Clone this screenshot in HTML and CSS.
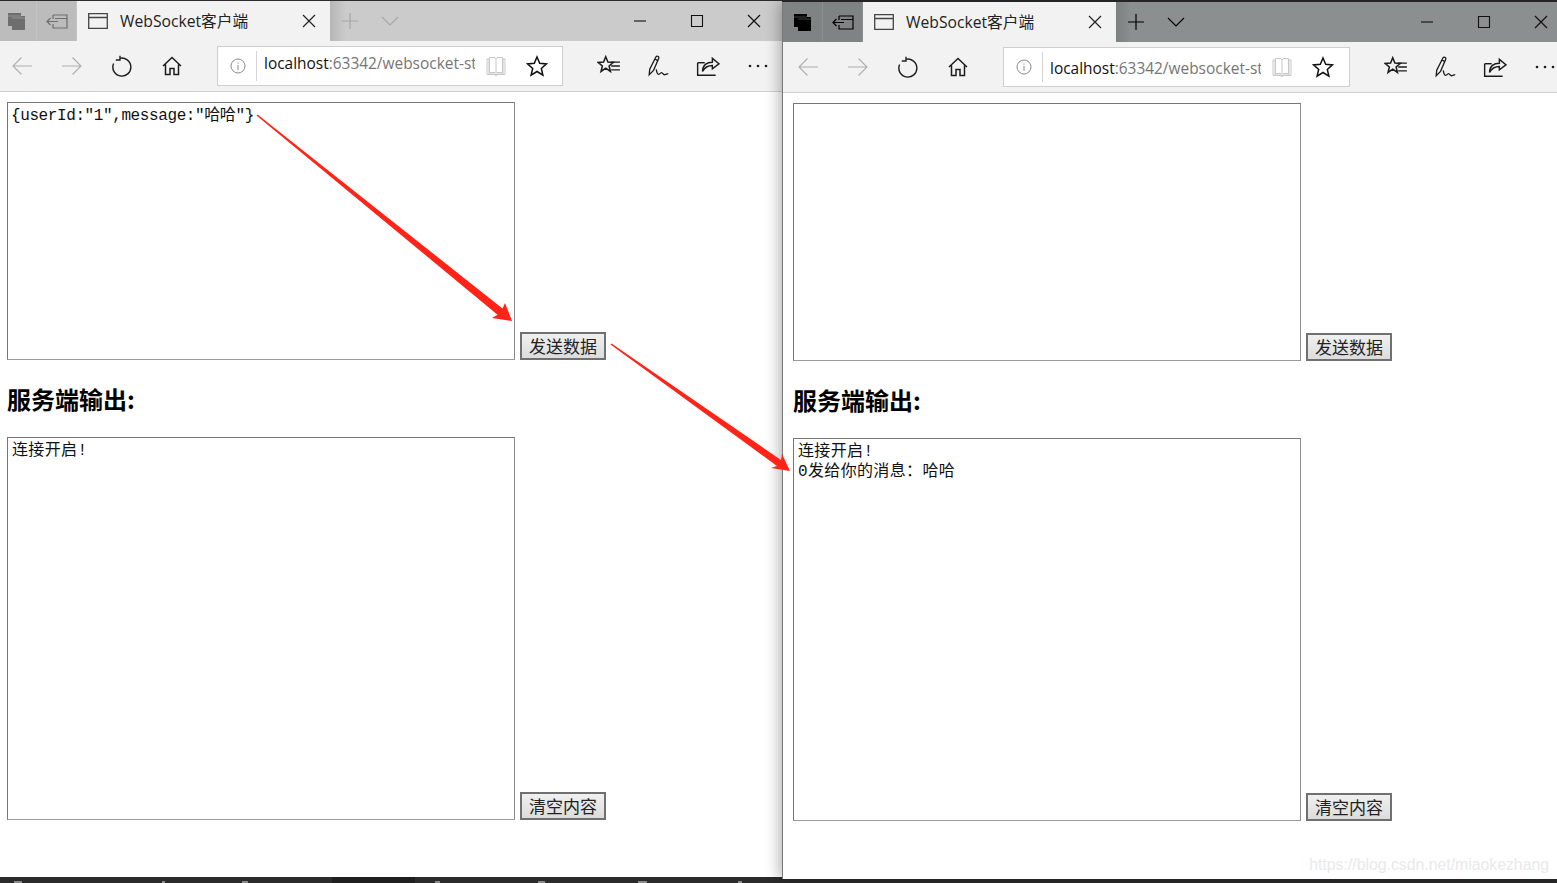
FILE: index.html
```html
<!DOCTYPE html>
<html lang="zh-CN">
<head>
<meta charset="utf-8">
<title>WebSocket客户端</title>
<link rel="stylesheet" href="styles.css">
</head>
<body>
<svg class="sprite" aria-hidden="true">
  <symbol id="i-tabs" viewBox="0 0 20 20"><path d="M1 2h13v3h4v14H5v-4H1z" fill="currentColor"/><path d="M5 7h13M1 5h13" stroke="#fff" stroke-opacity=".25" fill="none"/></symbol>
  <symbol id="i-aside" viewBox="0 0 22 20"><path d="M7 4h14v13H7v-4M7 8V4M9 7.500h12M1 10.500h11M4.500 7l-3.500 3.500 3.500 3.500" fill="none" stroke="currentColor" stroke-width="1.200"/></symbol>
  <symbol id="i-page" viewBox="0 0 20 16"><path d="M.7.700h18.600v14.600H.7zM.7 4.500h18.600" fill="none" stroke="currentColor" stroke-width="1.300"/></symbol>
  <symbol id="i-x" viewBox="0 0 14 14"><path d="M1 1l12 12M13 1L1 13" fill="none" stroke="currentColor" stroke-width="1.200"/></symbol>
  <symbol id="i-plus" viewBox="0 0 18 18"><path d="M9 1v16M1 9h16" fill="none" stroke="currentColor" stroke-width="1.200"/></symbol>
  <symbol id="i-chev" viewBox="0 0 18 10"><path d="M1 1l8 8 8-8" fill="none" stroke="currentColor" stroke-width="1.100"/></symbol>
  <symbol id="i-min" viewBox="0 0 14 14"><path d="M1 7h12" fill="none" stroke="currentColor" stroke-width="1.100"/></symbol>
  <symbol id="i-max" viewBox="0 0 14 14"><path d="M1.500 1.500h11v11h-11z" fill="none" stroke="currentColor" stroke-width="1.100"/></symbol>
  <symbol id="i-back" viewBox="0 0 22 20"><path d="M21 10H2M10.500 1.500L2 10l8.500 8.500" fill="none" stroke="currentColor" stroke-width="1.100"/></symbol>
  <symbol id="i-fwd" viewBox="0 0 22 20"><path d="M1 10h19M11.500 1.500L20 10l-8.500 8.500" fill="none" stroke="currentColor" stroke-width="1.100"/></symbol>
  <symbol id="i-reload" viewBox="0 0 22 22"><path d="M8.500 3.400A9 9 0 1 1 2.600 8.500M9 .8V5H4.800" fill="none" stroke="currentColor" stroke-width="1.400"/></symbol>
  <symbol id="i-home" viewBox="0 0 22 22"><path d="M2 11l9-8.500 9 8.500M4.500 9.500V19.500h4.500v-6h4v6h4.500V9.500" fill="none" stroke="currentColor" stroke-width="1.500"/></symbol>
  <symbol id="i-info" viewBox="0 0 16 16"><circle cx="8" cy="8" r="7" fill="none" stroke="currentColor"/><path d="M8 7v5M8 4.500v1.200" fill="none" stroke="currentColor"/></symbol>
  <symbol id="i-book" viewBox="0 0 20 20"><path d="M1 3h2v15h6l1 1 1-1h6V3h2v15.500h-7l-2 1-2-1H1zM3.500 1.500h5.500L10 3l1-1.500h5.500V16.500H11l-1 1-1-1H3.500zM10 3v14" fill="none" stroke="currentColor" stroke-width="1"/></symbol>
  <symbol id="i-star" viewBox="0 0 22 22"><path d="M11 2l2.700 6.300 6.800.6-5.200 4.500 1.600 6.700L11 16.500l-5.900 3.600 1.600-6.700L1.500 8.900l6.800-.6z" fill="none" stroke="currentColor" stroke-width="1.500"/></symbol>
  <symbol id="i-favs" viewBox="0 0 22 20"><path d="M8 1.500l2 4.800 5 .4-3.900 3.300 1.200 5L8 12l-4.300 3 1.200-5L1 6.700l5-.4z" fill="none" stroke="currentColor" stroke-width="1.400"/><path d="M13 6.500h8M13 10h8M13 13.500h8" fill="none" stroke="currentColor" stroke-width="1.200"/></symbol>
  <symbol id="i-pen" viewBox="0 0 22 22"><path d="M2 19l.5-5L8 3c1-1.800 3.400-.8 2.800 1L6 15zM7 4.500l3 1.500M8.500 14c1 6 2.500 5 4 3.500s2.500 2 4 1.500 2-1 3-1" fill="none" stroke="currentColor" stroke-width="1.200"/></symbol>
  <symbol id="i-share" viewBox="0 0 22 20"><path d="M1.500 7v11.500H18" fill="none" stroke="currentColor" stroke-width="1.300"/><path d="M6 15c0-6 4-8.500 9-8.500V3l6 5-6 4.500V9.500C11 9.500 8 11 6 15z" fill="none" stroke="currentColor" stroke-width="1.300"/><path d="M1.500 7H8" fill="none" stroke="currentColor" stroke-width="1.300"/></symbol>
  <symbol id="i-more" viewBox="0 0 20 4"><circle cx="2" cy="2" r="1.300" fill="currentColor"/><circle cx="10" cy="2" r="1.300" fill="currentColor"/><circle cx="18" cy="2" r="1.300" fill="currentColor"/></symbol>
</svg>

<div class="desktop">
  <div class="taskbar">
    <i class="tick tick-a"></i><i class="tick tick-b"></i><i class="tick tick-c"></i><i class="running"></i><i class="tick tick-d"></i><i class="tick tick-e"></i><i class="tick tick-f"></i><i class="tick tick-g"></i>
  </div>

  <section class="window window-back">
    <header class="tabbar">
      <span class="tab-action"><svg class="ic-tabs"><use href="#i-tabs"/></svg></span>
      <span class="tab-action"><svg class="ic-aside"><use href="#i-aside"/></svg></span>
      <div class="tab">
        <svg class="ic-page"><use href="#i-page"/></svg>
        <span class="tab-title">WebSocket客户端</span>
        <svg class="ic-x"><use href="#i-x"/></svg>
      </div>
      <span class="newtab newtab-first"><svg class="ic-plus"><use href="#i-plus"/></svg></span>
      <span class="newtab"><svg class="ic-chev"><use href="#i-chev"/></svg></span>
      <div class="winctl">
        <span class="ctl"><svg class="ic-ctl"><use href="#i-min"/></svg></span>
        <span class="ctl"><svg class="ic-ctl"><use href="#i-max"/></svg></span>
        <span class="ctl"><svg class="ic-ctl"><use href="#i-x"/></svg></span>
      </div>
    </header>
    <nav class="toolbar">
      <span class="tool dim"><svg class="ic-nav"><use href="#i-back"/></svg></span>
      <span class="tool dim"><svg class="ic-nav"><use href="#i-fwd"/></svg></span>
      <span class="tool"><svg class="ic-22"><use href="#i-reload"/></svg></span>
      <span class="tool"><svg class="ic-22"><use href="#i-home"/></svg></span>
      <div class="url">
        <svg class="ic-info"><use href="#i-info"/></svg>
        <span class="url-text"><b>localhost</b>:63342/websocket-stomp-client/index.html</span>
        <svg class="ic-book"><use href="#i-book"/></svg>
        <svg class="ic-star"><use href="#i-star"/></svg>
      </div>
      <div class="tools-right">
        <span class="tool"><svg class="ic-24"><use href="#i-favs"/></svg></span>
        <span class="tool"><svg class="ic-24"><use href="#i-pen"/></svg></span>
        <span class="tool"><svg class="ic-24"><use href="#i-share"/></svg></span>
        <span class="tool"><svg class="ic-more"><use href="#i-more"/></svg></span>
      </div>
    </nav>
    <main class="page">
      <div class="row">
        <textarea class="box box-send" readonly>{userId:"1",message:"哈哈"}</textarea>
        <button class="btn" type="button">发送数据</button>
      </div>
      <h3 class="heading">服务端输出:</h3>
      <div class="row">
        <textarea class="box box-out" readonly>连接开启!</textarea>
        <button class="btn" type="button">清空内容</button>
      </div>
    </main>
  </section>

  <section class="window window-front">
    <header class="tabbar">
      <span class="tab-action"><svg class="ic-tabs"><use href="#i-tabs"/></svg></span>
      <span class="tab-action"><svg class="ic-aside"><use href="#i-aside"/></svg></span>
      <div class="tab">
        <svg class="ic-page"><use href="#i-page"/></svg>
        <span class="tab-title">WebSocket客户端</span>
        <svg class="ic-x"><use href="#i-x"/></svg>
      </div>
      <span class="newtab newtab-first"><svg class="ic-plus"><use href="#i-plus"/></svg></span>
      <span class="newtab"><svg class="ic-chev"><use href="#i-chev"/></svg></span>
      <div class="winctl">
        <span class="ctl"><svg class="ic-ctl"><use href="#i-min"/></svg></span>
        <span class="ctl"><svg class="ic-ctl"><use href="#i-max"/></svg></span>
        <span class="ctl"><svg class="ic-ctl"><use href="#i-x"/></svg></span>
      </div>
    </header>
    <nav class="toolbar">
      <span class="tool dim"><svg class="ic-nav"><use href="#i-back"/></svg></span>
      <span class="tool dim"><svg class="ic-nav"><use href="#i-fwd"/></svg></span>
      <span class="tool"><svg class="ic-22"><use href="#i-reload"/></svg></span>
      <span class="tool"><svg class="ic-22"><use href="#i-home"/></svg></span>
      <div class="url">
        <svg class="ic-info"><use href="#i-info"/></svg>
        <span class="url-text"><b>localhost</b>:63342/websocket-stomp-client/index.html</span>
        <svg class="ic-book"><use href="#i-book"/></svg>
        <svg class="ic-star"><use href="#i-star"/></svg>
      </div>
      <div class="tools-right">
        <span class="tool"><svg class="ic-24"><use href="#i-favs"/></svg></span>
        <span class="tool"><svg class="ic-24"><use href="#i-pen"/></svg></span>
        <span class="tool"><svg class="ic-24"><use href="#i-share"/></svg></span>
        <span class="tool"><svg class="ic-more"><use href="#i-more"/></svg></span>
      </div>
    </nav>
    <main class="page">
      <div class="row">
        <textarea class="box box-send" readonly></textarea>
        <button class="btn" type="button">发送数据</button>
      </div>
      <h3 class="heading">服务端输出:</h3>
      <div class="row">
        <textarea class="box box-out" readonly>连接开启!
0发给你的消息：哈哈</textarea>
        <button class="btn" type="button">清空内容</button>
      </div>
    </main>
  </section>

  <svg class="arrows" viewBox="0 0 1557 883" aria-hidden="true">
    <polygon points="256.500,115.500 257.500,114.500 502.500,308.500 505,303 512,321 492,318 497.500,314.700"/>
    <polygon points="610.500,344.500 611.500,343.500 781,460 782,454 790,471 771,468 777,466"/>
  </svg>
  <span class="watermark">https://blog.csdn.net/miaokezhang</span>
</div>
</body>
</html>
```

FILE: styles.css
```css
* { box-sizing: border-box; }
html, body { margin: 0; height: 100%; }
body { overflow: hidden; background: #2b2b2b; font-family: "Open Sans", "Noto Sans CJK SC", sans-serif; }
.sprite { position: absolute; width: 0; height: 0; }
svg { display: block; }

.desktop { position: relative; width: 1557px; height: 883px; overflow: hidden; }

.taskbar { position: absolute; left: 0; right: 0; bottom: 0; height: 6px; background: #2b2b2b; }
.running { position: absolute; left: 332px; top: 0; width: 83px; height: 6px; background: #1f1f1f; }
.tick { position: absolute; bottom: 0; height: 2px; width: 8px; background: #8a8a8a; }
.tick-a { left: 14px; } .tick-b { left: 162px; width: 3px; } .tick-c { left: 242px; width: 6px; }
.tick-d { left: 435px; width: 5px; } .tick-e { left: 538px; width: 7px; } .tick-f { left: 638px; width: 9px; } .tick-g { left: 738px; width: 4px; }

.window { position: absolute; display: flex; flex-direction: column; background: #fff; overflow: hidden; }
.window-back { left: -3px; top: 1px; width: 785px; height: 876px; }
.window-front { left: 783px; top: 2px; width: 786px; height: 877px; box-shadow: -3px 0 14px rgba(0, 0, 0, .32); overflow: visible; }
.window-front::before { content: ""; position: absolute; left: -1px; top: 0; bottom: 0; width: 1px; background: #777; }

.tabbar { height: 40px; flex: none; display: flex; align-items: stretch; }
.window-back .tabbar { background: #cbcbcb; color: #6e6e6e; }
.window-front .tabbar { background: #8b8f8f; color: #000; }
.tab-action { width: 40px; flex: none; display: flex; align-items: center; justify-content: center; background: #bcbcbc; border-right: 1px solid #c4c4c4; }
.window-front .tab-action { background: #7f8383; border-right-color: #8b8f8f; }
.ic-tabs { width: 20px; height: 20px; }
.ic-aside { width: 22px; height: 20px; }

.tab { width: 253px; flex: none; background: #f2f2f2; color: #222; display: flex; align-items: center; padding: 0 14px 0 11px; }
.ic-page { width: 20px; height: 16px; flex: none; margin-bottom: 1px; color: #444; }
.tab-title { flex: 1; margin-left: 12px; padding-bottom: 2px; font-size: 15.700px; white-space: nowrap; }
.ic-x { width: 14px; height: 14px; flex: none; color: #222; }

.newtab { width: 40px; flex: none; display: flex; align-items: center; justify-content: center; }
.newtab-first { background: linear-gradient(90deg, rgba(0, 0, 0, .1), rgba(0, 0, 0, 0) 16px); }
.window-back .newtab { color: #a6a6a6; }
.ic-plus { width: 18px; height: 18px; }
.ic-chev { width: 18px; height: 10px; }

.winctl { margin-left: auto; display: flex; flex: none; }
.ctl { width: 57px; display: flex; align-items: center; justify-content: center; color: #111; }
.ic-ctl { width: 14px; height: 14px; }

.toolbar { height: 51px; flex: none; background: #f2f2f2; border-bottom: 1px solid #d0d0d0; display: flex; align-items: center; padding-left: 3px; }
.tool { width: 44px; height: 40px; flex: none; margin-right: 6px; display: flex; align-items: center; justify-content: center; color: #1c1c1c; }
.tool.dim { color: #aeaeae; }
.ic-nav { width: 22px; height: 20px; }
.ic-22 { width: 22px; height: 22px; }
.ic-24 { width: 24px; height: 24px; }
.ic-more { width: 20px; height: 4px; }

.url { width: 346px; height: 40px; flex: none; margin-left: 17px; background: #fff; border: 1px solid #cfcfcf; display: flex; align-items: center; }
.window-front .url { width: 347px; }
.ic-info { width: 16px; height: 16px; margin-left: 12px; flex: none; color: #8a8a8a; }
.url-text { width: 219px; margin-left: 10px; padding-left: 7px; border-left: 1px solid #d4d4d4; height: 30px; line-height: 24px; font-size: 15.450px; color: #767676; overflow: hidden; white-space: nowrap; flex: none; }
.window-front .url-text { line-height: 32px; }
.url-text b { font-weight: 400; color: #111; }
.ic-book { width: 20px; height: 20px; margin-left: 11px; flex: none; color: #c8c8c8; }
.ic-star { width: 22px; height: 22px; margin-left: 20px; flex: none; color: #111; }

.tools-right { display: flex; flex: none; margin-left: 24px; }
.tools-right .tool { margin-right: 5.500px; }

.page { flex: 1; padding: 10px 0 0 10px; background: #fff; }
.row { display: flex; align-items: flex-end; gap: 5px; }
.box { display: block; width: 508px; margin: 0; padding: 3px 4px; border: 1px solid #767676; border-bottom-color: #9a9a9a; border-right-color: #8a8a8a; background: #fff; color: #111; resize: none; outline: none; overflow: hidden; font-family: "Liberation Mono", "Noto Sans CJK SC", monospace; font-size: 16px; line-height: 20px; }
.box-send { height: 258px; padding-left: 3px; letter-spacing: -.4px; }
.box-out { height: 383px; letter-spacing: .35px; }
.btn { width: 86px; height: 28px; flex: none; margin: 0; padding: 0; border: 2px solid #707070; background: linear-gradient(#f0f0f0, #dcdcdc); color: #222; font-family: "Noto Sans CJK SC", sans-serif; font-size: 17px; line-height: 22px; }

.heading { margin: 22px 0 21px; height: 34px; font-family: "Noto Sans CJK SC", sans-serif; font-size: 24px; font-weight: 700; line-height: 34px; color: #000; }

.arrows { position: absolute; left: 0; top: 0; width: 1557px; height: 883px; pointer-events: none; }
.arrows polygon { fill: #ff2318; }
.watermark { position: absolute; right: 8px; top: 855px; font-family: "Liberation Sans", sans-serif; font-size: 15.800px; line-height: 20px; color: #e9e9e9; white-space: nowrap; }
```
